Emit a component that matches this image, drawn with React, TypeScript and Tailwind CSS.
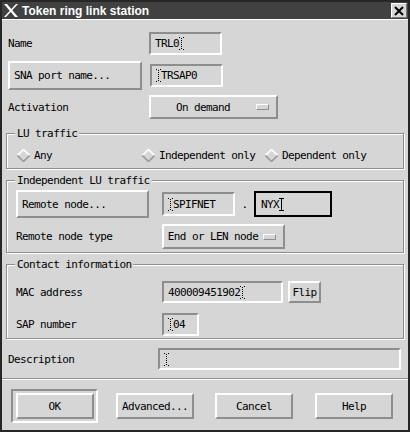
import React from "react";

const mono = "font-['DejaVu_Sans_Mono',monospace] text-[11px] tracking-[-0.6px] text-black leading-none";
const raised = "border-2 border-t-white border-l-white border-r-[#8e8e8e] border-b-[#8e8e8e] bg-[#d6d6d6]";
const sunken = "border-2 border-t-[#8e8e8e] border-l-[#8e8e8e] border-r-white border-b-white bg-[#d6d6d6]";
const frame = "relative border border-[#8e8e8e] shadow-[inset_1px_1px_0_#fff,1px_1px_0_#fff]";

function Caret({ solid = false }: { solid?: boolean }) {
  return (
    <svg width="5" height="13" viewBox="0 0 5 13" className="shrink-0">
      {solid ? (
        <g stroke="#000" strokeWidth="1">
          <path d="M0 0.5h5M0 12.5h5M2.5 0v13" />
        </g>
      ) : (
        <g fill="#000">
          <rect x="0" y="0" width="1" height="1" />
          <rect x="4" y="0" width="1" height="1" />
          <rect x="2" y="1" width="1" height="1" />
          <rect x="2" y="3" width="1" height="1" />
          <rect x="2" y="5" width="1" height="1" />
          <rect x="2" y="7" width="1" height="1" />
          <rect x="2" y="9" width="1" height="1" />
          <rect x="2" y="11" width="1" height="1" />
          <rect x="0" y="12" width="1" height="1" />
          <rect x="4" y="12" width="1" height="1" />
        </g>
      )}
    </svg>
  );
}

function Field({ w, h, text, caret, className = "" }: { w: number; h: number; text?: string; caret?: "before" | "after"; className?: string }) {
  return (
    <div className={`${sunken} flex items-center pl-[4px] ${mono} ${className}`} style={{ width: w, height: h }}>
      {caret === "before" && <Caret />}
      {text && <span>{text}</span>}
      {caret === "after" && <Caret />}
    </div>
  );
}

function Button({ w, h, label, left = false }: { w: number; h: number; label: string; left?: boolean }) {
  return (
    <div className={`${raised} flex items-center ${left ? "pl-[4px]" : "justify-center"} ${mono}`} style={{ width: w, height: h }}>
      {label}
    </div>
  );
}

function OptionMenu({ w, h, label }: { w: number; h: number; label: string }) {
  return (
    <div className={`${raised} flex items-center pl-[2px] pr-[7px] ${mono}`} style={{ width: w, height: h }}>
      <span className="flex-1 text-center">{label}</span>
      <span className="ml-[3px] block h-[6px] w-[13px] border border-t-white border-l-white border-r-[#8e8e8e] border-b-[#8e8e8e]" />
    </div>
  );
}

function Diamond() {
  return (
    <svg width="13" height="13" viewBox="0 0 13 13" className="shrink-0">
      <path d="M0.5 6.5L6.5 0.5L12.5 6.5" fill="none" stroke="#ffffff" strokeWidth="1.6" />
      <path d="M0.5 6.5L6.5 12.5L12.5 6.5" fill="none" stroke="#9a9a9a" strokeWidth="1.6" />
    </svg>
  );
}

function Radio({ label, w }: { label: string; w: number }) {
  return (
    <div className={`flex items-center gap-[4px] ${mono}`} style={{ width: w }}>
      <Diamond />
      <span>{label}</span>
    </div>
  );
}

export default function App() {
  return (
    <div className="h-[432px] w-[410px] overflow-hidden border-2 border-[#262626] bg-[#d6d6d6]">
      {/* title bar */}
      <div className="flex h-[17px] items-center bg-[#414141] pr-[1px]">
        <svg width="16" height="13" viewBox="0 0 16 13" className="ml-[1px]">
          <path d="M1 0h3l11 13h-3z" fill="#fff" />
          <path d="M13 0h2L3 13H1z" fill="#fff" />
        </svg>
        <span className="ml-[3px] font-['Liberation_Sans',Arial,sans-serif] text-[12px] font-bold leading-none text-white">
          Token ring link station
        </span>
        <div className="ml-auto flex h-[15px] w-[16px] items-center justify-center border border-t-white border-l-white border-r-[#777] border-b-[#777] bg-[#d6d6d6]">
          <svg width="10" height="10" viewBox="0 0 10 10">
            <path d="M1 1L9 9M9 1L1 9" stroke="#000" strokeWidth="2" />
          </svg>
        </div>
      </div>
      <div className="h-[1px] bg-white" />

      {/* body */}
      <div className="flex flex-col">
        <div className="mt-[12px] flex items-center">
          <span className={`${mono} ml-[6px] w-[141px]`}>Name</span>
          <Field w={73} h={23} text="TRL0" caret="after" />
        </div>

        <div className="mt-[6px] flex items-center">
          <div className="ml-[6px] mr-[8px]">
            <Button w={134} h={29} label="SNA port name..." left />
          </div>
          <Field w={73} h={23} text="TRSAP0" caret="before" />
        </div>

        <div className="mt-[5px] flex items-center">
          <span className={`${mono} ml-[6px] w-[141px]`}>Activation</span>
          <OptionMenu w={129} h={24} label="On demand" />
        </div>

        {/* LU traffic */}
        <div className={`${frame} ml-[4px] mt-[14px] h-[36px] w-[398px]`}>
          <span className={`${mono} absolute -top-[6px] left-[8px] bg-[#d6d6d6] px-[2px]`}>LU traffic</span>
          <div className="mt-[15px] flex items-center pl-[10px]">
            <Radio label="Any" w={125} />
            <Radio label="Independent only" w={123} />
            <Radio label="Dependent only" w={130} />
          </div>
        </div>

        {/* Independent LU traffic */}
        <div className={`${frame} ml-[4px] mt-[11px] h-[73px] w-[398px]`}>
          <span className={`${mono} absolute -top-[6px] left-[8px] bg-[#d6d6d6] px-[2px]`}>Independent LU traffic</span>
          <div className="mt-[9px] flex items-center">
            <div className="ml-[9px] mr-[13px]">
              <Button w={133} h={28} label="Remote node..." left />
            </div>
            <Field w={73} h={24} text="SPIFNET" caret="before" />
            <span className={`${mono} w-[19px] text-center`}>.</span>
            <div className={`flex h-[26px] w-[78px] items-center border-2 border-black bg-[#d6d6d6] pl-[5px] ${mono}`}>
              <span>NYX</span>
              <Caret solid />
            </div>
          </div>
          <div className="mt-[6px] flex items-center">
            <span className={`${mono} ml-[9px] w-[146px]`}>Remote node type</span>
            <OptionMenu w={123} h={25} label="End or LEN node" />
          </div>
        </div>

        {/* Contact information */}
        <div className={`${frame} ml-[4px] mt-[11px] h-[75px] w-[398px]`}>
          <span className={`${mono} absolute -top-[6px] left-[8px] bg-[#d6d6d6] px-[2px]`}>Contact information</span>
          <div className="mt-[16px] flex items-center">
            <span className={`${mono} ml-[9px] w-[146px]`}>MAC address</span>
            <Field w={121} h={22} text="400009451902" caret="after" />
            <div className="ml-[5px]">
              <Button w={33} h={22} label="Flip" />
            </div>
          </div>
          <div className="mt-[10px] flex items-center">
            <span className={`${mono} ml-[9px] w-[146px]`}>SAP number</span>
            <Field w={37} h={23} text="04" caret="before" />
          </div>
        </div>

        <div className="mt-[9px] flex items-center">
          <span className={`${mono} ml-[6px] w-[150px]`}>Description</span>
          <Field w={243} h={22} caret="before" />
        </div>

        <div className="mt-[8px] h-[1px] bg-[#8e8e8e]" />
        <div className="h-[1px] bg-white" />

        <div className="mt-[9px] flex items-center">
          <div className={`${sunken} ml-[9px] flex h-[34px] w-[87px] items-center justify-center`}>
            <Button w={78} h={26} label="OK" />
          </div>
          <div className="ml-[18px]">
            <Button w={78} h={26} label="Advanced..." />
          </div>
          <div className="ml-[21px]">
            <Button w={78} h={26} label="Cancel" />
          </div>
          <div className="ml-[22px]">
            <Button w={78} h={26} label="Help" />
          </div>
        </div>
      </div>
    </div>
  );
}
